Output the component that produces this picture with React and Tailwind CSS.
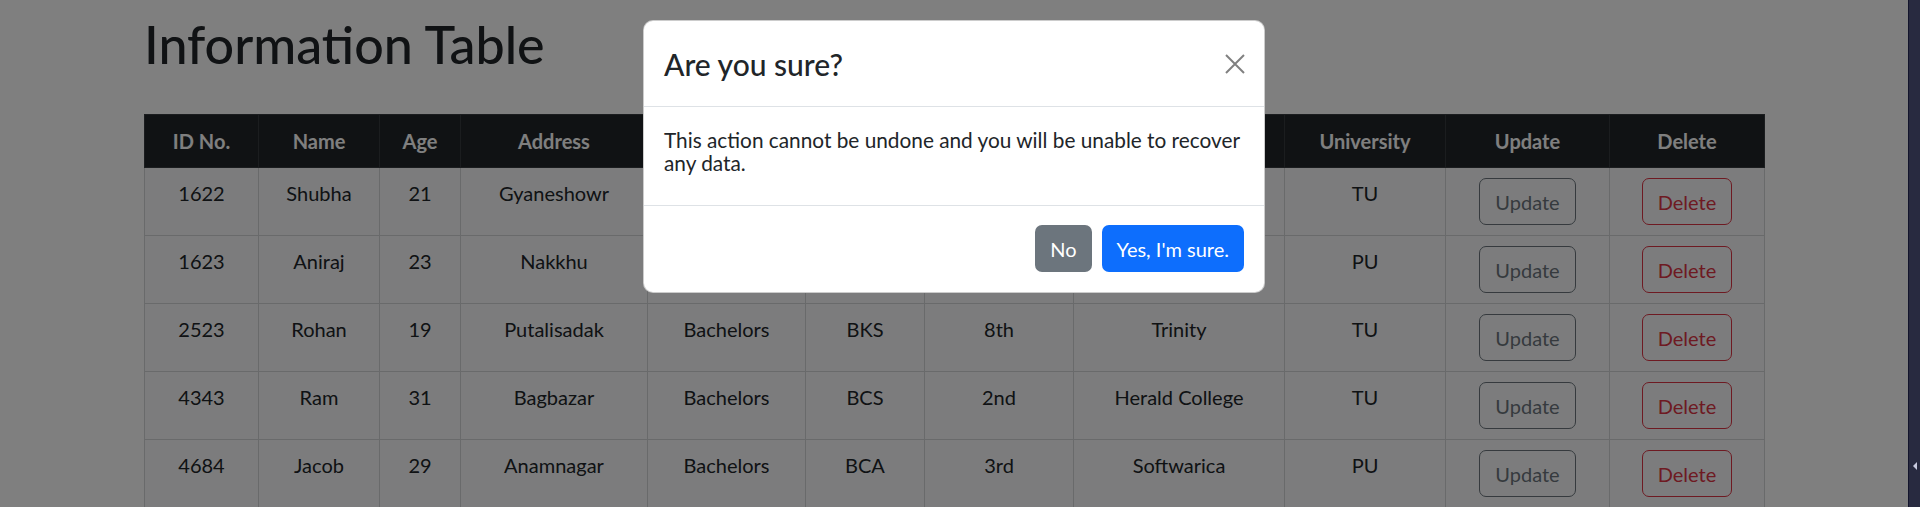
const columns = [
  { label: "ID No.", width: "w-[114px]" },
  { label: "Name", width: "w-[121px]" },
  { label: "Age", width: "w-[81px]" },
  { label: "Address", width: "w-[187px]" },
  { label: "Level", width: "w-[158px]" },
  { label: "Faculty", width: "w-[119px]" },
  { label: "Semester", width: "w-[149px]" },
  { label: "College", width: "w-[211px]" },
  { label: "University", width: "w-[161px]" },
  { label: "Update", width: "w-[164px]" },
  { label: "Delete", width: "w-[155px]" },
]

const students = [
  ["1622", "Shubha", "21", "Gyaneshowr", "Bachelors", "BIT", "6th", "Islington", "TU"],
  ["1623", "Aniraj", "23", "Nakkhu", "Bachelors", "BBA", "4th", "Kathmandu", "PU"],
  ["2523", "Rohan", "19", "Putalisadak", "Bachelors", "BKS", "8th", "Trinity", "TU"],
  ["4343", "Ram", "31", "Bagbazar", "Bachelors", "BCS", "2nd", "Herald College", "TU"],
  ["4684", "Jacob", "29", "Anamnagar", "Bachelors", "BCA", "3rd", "Softwarica", "PU"],
]

const StudentRow = ({ student }) => {
  return (
    <tr className="bg-[#f8f9fa]">
      {student.map((value, index) => (
        <td
          key={index}
          className="border border-[#d2d4d6] px-[10px] py-[10px] align-top text-center text-[20px] leading-[30px] text-[#212529]"
        >
          {value}
        </td>
      ))}
      <td className="border border-[#d2d4d6] px-[10px] py-[10px] align-top text-center">
        <button className="h-[47px] rounded-[7px] border border-[#6c757d] px-[15px] text-[20px] leading-[30px] text-[#6c757d]">
          Update
        </button>
      </td>
      <td className="border border-[#d2d4d6] px-[10px] py-[10px] align-top text-center">
        <button className="h-[47px] rounded-[7px] border border-[#dc3545] px-[15px] text-[20px] leading-[30px] text-[#dc3545]">
          Delete
        </button>
      </td>
    </tr>
  )
}

const CloseIcon = () => (
  <svg width="20" height="20" viewBox="0 0 20 20" fill="none" stroke="currentColor" strokeWidth="2">
    <path d="M1 1L19 19M19 1L1 19" />
  </svg>
)

const ConfirmModal = () => {
  return (
    <div className="w-[622px] overflow-hidden rounded-[10px] border border-black/20 bg-white">
      <div className="flex h-[86px] items-center justify-between border-b border-[#dee2e6] pr-[19px] pl-[20px]">
        <h4 className="text-[30px] leading-[36px] font-medium text-[#212529]">Are you sure?</h4>
        <button className="flex h-[20px] w-[20px] items-center justify-center text-[#808080]">
          <CloseIcon />
        </button>
      </div>
      <div className="h-[99px] border-b border-[#dee2e6] px-[20px] pt-[21px]">
        <p className="text-[20.8px] leading-[23px] text-[#212529]">
          This action cannot be undone and you will be unable to recover any data.
        </p>
      </div>
      <div className="flex h-[86px] justify-end gap-[10px] pt-[19px] pr-[20px]">
        <button className="h-[47px] rounded-[7px] bg-[#6c757d] px-[15px] text-[20px] leading-[30px] text-white">
          No
        </button>
        <button className="h-[47px] rounded-[7px] bg-[#0d6efd] px-[15px] text-[20px] leading-[30px] text-white">
          Yes, I'm sure.
        </button>
      </div>
    </div>
  )
}

export default function App() {
  return (
    <div className="flex h-[507px] w-full overflow-hidden bg-white font-['Lato',sans-serif]">
      <div className="relative h-full w-[1908px] shrink-0">
        <div className="mx-auto w-[1650px] px-[15px] pt-[14px]">
          <h1 className="text-[52px] leading-[60px] font-medium text-[#212529]">Information Table</h1>
          <table className="mt-[40px] w-[1620px] table-fixed border-collapse">
            <thead>
              <tr className="bg-[#212529]">
                {columns.map((column) => (
                  <th
                    key={column.label}
                    className={`${column.width} border border-[#373b3e] px-[10px] py-[11px] text-center text-[20px] leading-[30px] font-bold text-white`}
                  >
                    {column.label}
                  </th>
                ))}
              </tr>
            </thead>
            <tbody>
              {students.map((student) => (
                <StudentRow key={student[0]} student={student} />
              ))}
            </tbody>
          </table>
        </div>

        <div className="absolute inset-0 flex justify-center bg-black/50 pt-[20px]">
          <div>
            <ConfirmModal />
          </div>
        </div>
      </div>

      <div className="flex h-full flex-1 flex-col items-center justify-end border-l border-[#12142c] bg-[#282a40] pb-[37px]">
        <div className="h-0 w-0 border-y-[4px] border-r-[4px] border-y-transparent border-r-[#c9cbe0]" />
      </div>
    </div>
  )
}
